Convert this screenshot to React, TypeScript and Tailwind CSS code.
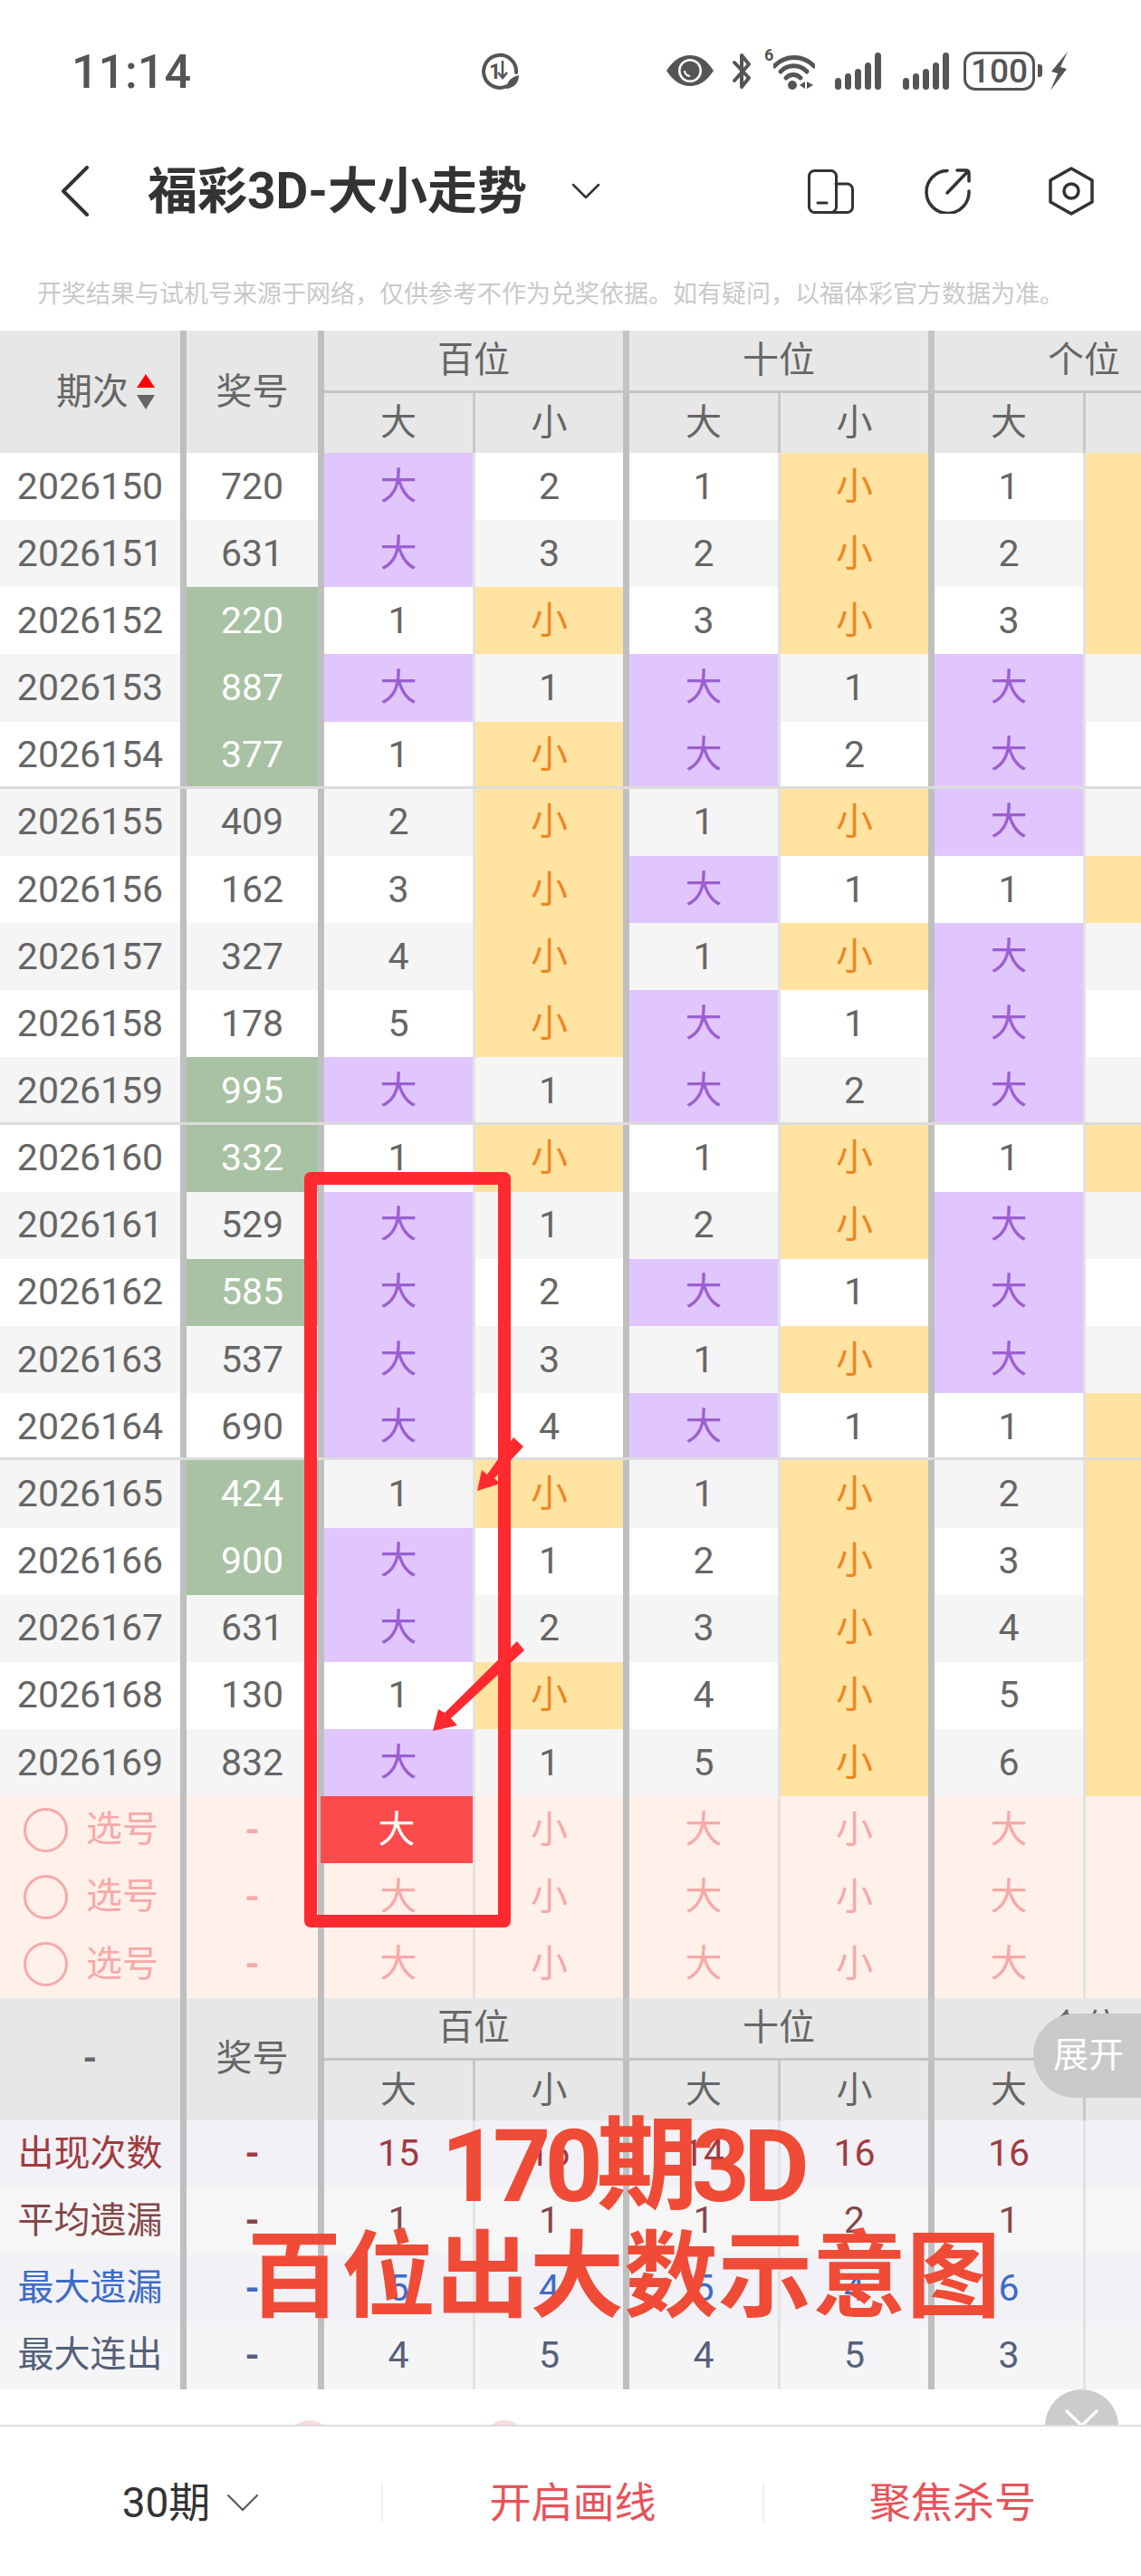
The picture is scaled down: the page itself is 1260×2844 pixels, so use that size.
import React from 'react';

const rows: [string, string, boolean, string[]][] = [
  ['2026150', '720', false, ['大', '2', '1', '小', '1', '小']],
  ['2026151', '631', false, ['大', '3', '2', '小', '2', '小']],
  ['2026152', '220', true, ['1', '小', '3', '小', '3', '小']],
  ['2026153', '887', true, ['大', '1', '大', '1', '大', '1']],
  ['2026154', '377', true, ['1', '小', '大', '2', '大', '2']],
  ['2026155', '409', false, ['2', '小', '1', '小', '大', '3']],
  ['2026156', '162', false, ['3', '小', '大', '1', '1', '小']],
  ['2026157', '327', false, ['4', '小', '1', '小', '大', '1']],
  ['2026158', '178', false, ['5', '小', '大', '1', '大', '2']],
  ['2026159', '995', true, ['大', '1', '大', '2', '大', '3']],
  ['2026160', '332', true, ['1', '小', '1', '小', '1', '小']],
  ['2026161', '529', false, ['大', '1', '2', '小', '大', '1']],
  ['2026162', '585', true, ['大', '2', '大', '1', '大', '2']],
  ['2026163', '537', false, ['大', '3', '1', '小', '大', '3']],
  ['2026164', '690', false, ['大', '4', '大', '1', '1', '小']],
  ['2026165', '424', true, ['1', '小', '1', '小', '2', '小']],
  ['2026166', '900', true, ['大', '1', '2', '小', '3', '小']],
  ['2026167', '631', false, ['大', '2', '3', '小', '4', '小']],
  ['2026168', '130', false, ['1', '小', '4', '小', '5', '小']],
  ['2026169', '832', false, ['大', '1', '5', '小', '6', '小']],
];

const stats = [
  { label: '出现次数', vals: ['15', '16', '14', '16', '16'], color: 'text-[#a23a3f]', bg: 'bg-[#f1f1f6]' },
  { label: '平均遗漏', vals: ['1', '1', '1', '2', '1'], color: 'text-[#84474a]', bg: 'bg-[#f6f6f6]' },
  { label: '最大遗漏', vals: ['5', '4', '5', '4', '6'], color: 'text-[#3f6bc6]', bg: 'bg-[#f1f1f6]' },
  { label: '最大连出', vals: ['4', '5', '4', '5', '3'], color: 'text-[#55607a]', bg: 'bg-[#f5f5f7]' },
];

const sepMain = 'border-r-[7px] border-[#bfbfbf]';
const sepInner = 'border-r-[3px] border-[#e2e2e2]';
const center = 'flex items-center justify-center leading-none';

function Value({ i, v, alt }: { i: number; v: string; alt: boolean }) {
  const tone = v === '大' ? 'bg-[#e1c6fd] text-[#9a5fd0]' : v === '小' ? 'bg-[#ffe3a1] text-[#ee8622]' : alt ? 'bg-[#f5f5f5] text-[#666666]' : 'bg-white text-[#666666]';
  return <div className={`${center} flex-none ${i % 2 === 0 ? `w-[167px] ${sepInner}` : `w-[170px] ${sepMain}`} ${tone}`}>{v}</div>;
}

function TableHeader({ first }: { first: React.ReactNode }) {
  return (
    <div className="flex h-[135px] bg-[#e7e7e7] text-[40px] text-[#666666]">
      <div className={`flex-none w-[206px] ${sepMain} flex items-center leading-none`}>{first}</div>
      <div className={`${center} flex-none w-[152px] ${sepMain}`}>奖号</div>
      {['百位', '十位', '个位'].map((name) => (
        <div key={name} className="flex-none w-[337px] flex flex-col">
          <div className={`${center} h-[69px] border-b-[3px] border-[#c4c4c4] ${sepMain}`}>{name}</div>
          <div className="flex flex-1">
            <div className={`${center} flex-none w-[167px] border-r-[3px] border-[#c8c8c8]`}>大</div>
            <div className={`${center} flex-none w-[170px] ${sepMain}`}>小</div>
          </div>
        </div>
      ))}
    </div>
  );
}

function StatusBar() {
  const ink = '#555555';
  const signal = (
    <svg width="51" height="41" viewBox="0 0 51 41" fill={ink} className="flex-none">
      <rect x="0" y="28" width="7" height="13" rx="3.5" />
      <rect x="11" y="23" width="7" height="18" rx="3.5" />
      <rect x="22" y="18" width="7" height="23" rx="3.5" />
      <rect x="33" y="11" width="7" height="30" rx="3.5" />
      <rect x="44" y="0" width="7" height="41" rx="3.5" />
    </svg>
  );
  return (
    <div className="flex h-[156px] items-center pl-[79px] text-[#555555]">
      <div className="flex-none w-[451px] text-[52px] font-medium leading-none pt-[3px]">11:14</div>
      {/* eco timer */}
      <svg width="45" height="41" viewBox="0 0 45 41" fill="none" className="flex-none">
        <path d="M30 37 A18 18 0 1 1 40 22" stroke={ink} strokeWidth="4" strokeLinecap="round" />
        <text x="10" y="29" fontSize="23" fontWeight="700" fill={ink} fontFamily="Roboto">1</text>
        <path d="M25 9 V27 M20 22 L25 28 L30 22" stroke={ink} strokeWidth="2.5" />
        <path d="M29 40 C30 30 36 27 43 25 C43 33 38 39 29 40Z" fill={ink} />
      </svg>
      <svg width="54" height="36" viewBox="0 0 54 36" className="flex-none ml-[160px]">
        <path d="M1 18 C9 6 17 1 27 1 C37 1 45 6 53 18 C45 30 37 35 27 35 C17 35 9 30 1 18Z" fill={ink} />
        <circle cx="27" cy="18" r="13" fill="#ffffff" />
        <circle cx="27" cy="18" r="10.5" fill={ink} />
        <path d="M21 18 A6 6 0 0 0 27 24" stroke="#ffffff" strokeWidth="2" fill="none" />
      </svg>
      <svg width="26" height="41" viewBox="0 0 26 41" fill="none" className="flex-none ml-[17px]">
        <path d="M5 11 L21 28 L13 38 V3 L21 13 L5 31" stroke={ink} strokeWidth="4" strokeLinejoin="round" strokeLinecap="round" />
      </svg>
      <div className="flex-none w-[10px] ml-[12px] self-start mt-[52px] text-[18px] font-bold leading-none">6</div>
      <svg width="46" height="41" viewBox="0 0 46 41" fill="none" className="flex-none">
        <path d="M1 15 A30 30 0 0 1 45 15" stroke={ink} strokeWidth="5" strokeLinecap="round" />
        <path d="M8 21 A20 20 0 0 1 37 21" stroke={ink} strokeWidth="5" strokeLinecap="round" />
        <path d="M14 28 A11 11 0 0 1 30 28" stroke={ink} strokeWidth="5" strokeLinecap="round" />
        <circle cx="21" cy="36" r="5" fill={ink} />
        <path d="M29 36 L35 32 V40Z M37 32 L44 36 L37 40Z" fill={ink} />
      </svg>
      <div className="flex-none ml-[22px]">{signal}</div>
      <div className="flex-none ml-[24px]">{signal}</div>
      <div className={`${center} flex-none ml-[16px] w-[79px] h-[43px] rounded-[13px] border-[3px] border-[#555555] text-[37px] font-medium`}>100</div>
      <div className="flex-none ml-[3px] w-[5px] h-[14px] rounded-r-[3px] bg-[#555555]" />
      <svg width="19" height="43" viewBox="0 0 19 43" className="flex-none ml-[9px]" fill={ink}>
        <path d="M19 0 L1 22 L8 24 L0 43 L18 19 L11 17 Z" />
      </svg>
    </div>
  );
}

function NavBar() {
  return (
    <div className="flex h-[110px] items-center pl-[68px] text-[#333333]">
      <svg width="30" height="56" viewBox="0 0 30 56" fill="none" className="flex-none">
        <path d="M28 2 L2 28 L28 54" stroke="#333333" strokeWidth="4" strokeLinecap="round" strokeLinejoin="round" />
      </svg>
      <div className="flex-none w-[418px] ml-[65px] text-[55px] font-bold leading-none whitespace-nowrap">福彩3D-大小走势</div>
      <svg width="32" height="18" viewBox="0 0 32 18" fill="none" className="flex-none ml-[50px]">
        <path d="M2 2 L16 16 L30 2" stroke="#333333" strokeWidth="2.5" strokeLinecap="round" strokeLinejoin="round" />
      </svg>
      <svg width="51" height="49" viewBox="0 0 51 49" fill="none" stroke="#333333" strokeWidth="3" strokeLinecap="round" className="flex-none ml-[229px]">
        <rect x="1.5" y="1.5" width="30" height="46" rx="6" />
        <path d="M31 16 H43 A6 6 0 0 1 49.5 22 V41 A6 6 0 0 1 43 47.5 H26" />
        <path d="M11 37 H21" />
      </svg>
      <svg width="51" height="50" viewBox="0 0 51 50" fill="none" stroke="#333333" strokeWidth="3.5" strokeLinecap="round" strokeLinejoin="round" className="flex-none ml-[78px]">
        <path d="M25 2.5 A23.5 23.5 0 1 0 49 25" />
        <path d="M25 27 L48 3" />
        <path d="M36 2 H46 A3 3 0 0 1 49 5 V14" />
      </svg>
      <svg width="50" height="54" viewBox="0 0 50 54" fill="none" stroke="#333333" strokeWidth="3.5" strokeLinejoin="round" className="flex-none ml-[86px]">
        <path d="M25 2 L48 15 V39 L25 52 L2 39 V15 Z" />
        <circle cx="25" cy="27" r="8" />
      </svg>
    </div>
  );
}

export default function App() {
  return (
    <div className="relative w-[1260px] h-[2844px] overflow-hidden bg-white font-['Roboto','Noto_Sans_CJK_SC',sans-serif]">
      <StatusBar />
      <NavBar />
      <div className="h-[99px] pt-[36px] pl-[41px] text-[27px] leading-[46px] text-[#c9c9c9] whitespace-nowrap">
        开奖结果与试机号来源于网络，仅供参考不作为兑奖依据。如有疑问，以福体彩官方数据为准。
      </div>

      {/* table */}
      <TableHeader
        first={
          <div className="flex items-center pl-[62px]">
            <span>期次</span>
            <svg width="20" height="39" viewBox="0 0 20 39" className="ml-[9px] flex-none">
              <path d="M10 0 L20 15 H0 Z" fill="#ff0000" />
              <path d="M0 23 H20 L10 39 Z" fill="#666666" />
            </svg>
          </div>
        }
      />
      <div className="text-[41px]">
        {rows.map(([issue, num, green, vals], r) => {
          const alt = r % 2 === 1;
          return (
            <div key={issue} className={`flex h-[74.17px] ${r % 5 === 4 && r < 19 ? 'border-b-[3px] border-[#dcdcdc] [&>div]:pt-[3px]' : ''}`}>
              <div className={`${center} flex-none w-[206px] ${sepMain} text-[#666666] ${alt ? 'bg-[#f5f5f5]' : 'bg-white'}`}>{issue}</div>
              <div className={`${center} flex-none w-[152px] ${sepMain} ${green ? 'bg-[#a8c2a3] text-white' : alt ? 'bg-[#f5f5f5] text-[#666666]' : 'bg-white text-[#666666]'}`}>{num}</div>
              {vals.map((v, i) => (
                <Value key={i} i={i} v={v} alt={alt} />
              ))}
            </div>
          );
        })}
        {[0, 1, 2].map((r) => (
          <div key={r} className="flex h-[74.17px] bg-[#fff0ea] text-[#f7a9a9]">
            <div className={`flex items-center flex-none w-[206px] ${sepMain} pl-[26px] text-[40px] leading-none`}>
              <span className="flex-none w-[49px] h-[49px] rounded-full border-[3px] border-[#f7a9a9]" />
              <span className="ml-[20px]">选号</span>
            </div>
            <div className={`${center} flex-none w-[152px] ${sepMain} font-bold`}>-</div>
            {['大', '小', '大', '小', '大', '小'].map((v, i) =>
              r === 0 && i === 0 ? (
                <div key={i} className={`${center} flex-none w-[171px] -ml-[4px] ${sepInner} bg-[#fb4b4c] text-white`}>{v}</div>
              ) : (
                <div key={i} className={`${center} flex-none ${i % 2 === 0 ? `w-[167px] ${sepInner}` : `w-[170px] ${sepMain}`}`}>{v}</div>
              ),
            )}
          </div>
        ))}
      </div>

      <TableHeader first={<div className="w-full text-center font-bold">-</div>} />
      <div className="text-[41px]">
        {stats.map((s) => (
          <div key={s.label} className={`flex h-[74.25px] ${s.bg} ${s.color}`}>
            <div className={`${center} flex-none w-[206px] ${sepMain} text-[40px]`}>{s.label}</div>
            <div className={`${center} flex-none w-[152px] ${sepMain} font-bold`}>-</div>
            {[...s.vals, ''].map((v, i) => (
              <div key={i} className={`${center} flex-none ${i % 2 === 0 ? `w-[167px] ${sepInner}` : `w-[170px] ${sepMain}`}`}>{v}</div>
            ))}
          </div>
        ))}
      </div>

      {/* gap above the bottom bar, with the half-hidden ball row and collapse tab */}
      <div className="relative h-[39px] overflow-hidden">
        <div className="absolute left-[317px] top-[34px] w-[50px] h-[50px] rounded-full bg-[#fbdcdc]" />
        <div className="absolute left-[532px] top-[34px] w-[50px] h-[50px] rounded-full bg-[#fbdcdc]" />
        <div className="absolute left-[1154px] top-0 w-[81px] h-[81px] rounded-full bg-[#cccccc]" />
        <svg width="37" height="20" viewBox="0 0 37 20" fill="none" className="absolute left-[1176px] top-[22px]">
          <path d="M2 2 L18.5 18 L35 2" stroke="#ffffff" strokeWidth="3.5" strokeLinecap="round" />
        </svg>
      </div>

      {/* bottom bar */}
      <div className="flex h-[167px] border-t-2 border-[#dddddd] pt-[63px] pb-[60px] bg-white">
        <div className="flex items-center justify-center flex-none w-[421px] text-[46px] text-[#333333] leading-none">
          <span>30期</span>
          <svg width="36" height="20" viewBox="0 0 36 20" fill="none" className="ml-[18px] flex-none">
            <path d="M2 2 L18 18 L34 2" stroke="#555555" strokeWidth="2" strokeLinecap="round" />
          </svg>
        </div>
        <div className={`${center} flex-none w-[421px] border-l-2 border-[#eeeeee] text-[46px] text-[#e9525a]`}>开启画线</div>
        <div className={`${center} flex-1 border-l-2 border-[#eeeeee] text-[46px] text-[#e9525a]`}>聚焦杀号</div>
      </div>

      {/* hand-drawn annotations on top of the screenshot */}
      <div className="absolute left-[336px] top-[1294px] w-[228px] h-[834px] rounded-[7px] border-[14px] border-[#ff2a2f]" />
      <svg width="1260" height="2844" viewBox="0 0 1260 2844" className="absolute left-0 top-0 pointer-events-none">
        <path d="M567 1587 L578 1597 L546 1632 L552 1638 L527 1646 L532 1623 L538 1628 Z" fill="#ff2a2f" />
        <path d="M571 1812 L579 1822 L498 1897 L505 1905 L478 1911 L484 1887 L491 1891 Z" fill="#ff2a2f" />
      </svg>
      <div className="absolute left-[487px] top-[2332px] whitespace-nowrap text-[112px] font-bold leading-[120px] tracking-[-7px] text-[#ef4b36]">170期3D</div>
      <div className="absolute left-[273px] top-[2453px] whitespace-nowrap text-[104px] font-bold leading-[124px] text-[#ef4b36]">百位出大数示意图</div>
      <div className="absolute left-[1141px] top-[2223px] w-[130px] h-[93px] rounded-l-full bg-[#c9c9c9] flex items-center pl-[22px] text-[39px] leading-none text-white">展开</div>
    </div>
  );
}
